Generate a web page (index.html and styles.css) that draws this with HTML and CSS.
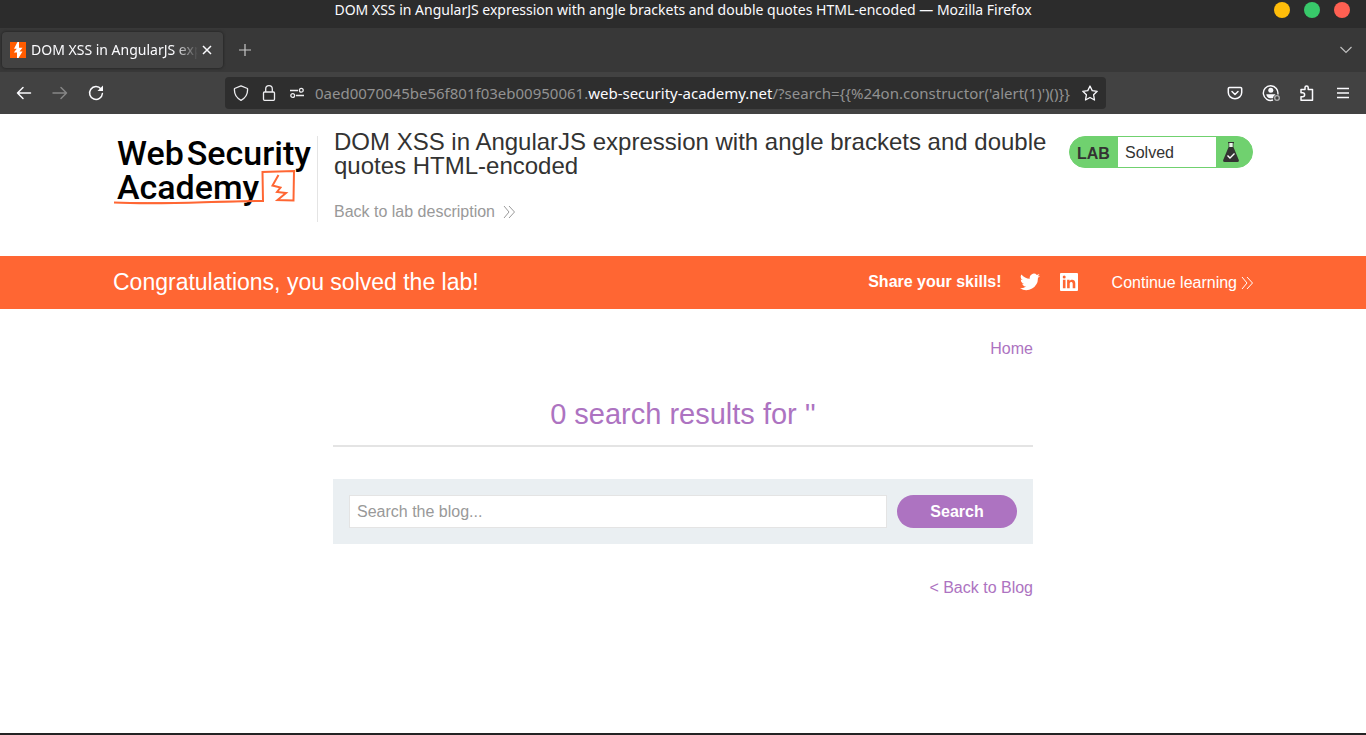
FILE: index.html
```html
<!DOCTYPE html>
<html lang="en">
<head>
<meta charset="utf-8">
<title>DOM XSS in AngularJS expression with angle brackets and double quotes HTML-encoded</title>
<link rel="stylesheet" href="styles.css">
</head>
<body>
<div class="titlebar">
  <span class="window-title">DOM XSS in AngularJS expression with angle brackets and double quotes HTML-encoded — Mozilla Firefox</span>
  <div class="window-buttons">
    <button class="dot dot-yellow" aria-label="Minimize"></button>
    <button class="dot dot-green" aria-label="Maximize"></button>
    <button class="dot dot-red" aria-label="Close window"></button>
  </div>
</div>
<div class="tabbar">
  <div class="tab">
    <svg class="favicon" viewBox="0 0 16 16"><path fill="#ff5c00" d="M0 0h16v16H0z"/><path fill="#fff" d="M7.500 0H9v5.800h3.500L9.500 9.500H12.500L8.500 16H7v-5.500H3.800L6.800 6.800H4z"/></svg>
    <span class="tab-label">DOM XSS in AngularJS exp</span>
    <button class="icon-button tab-close" aria-label="Close tab"><svg width="10" height="10" viewBox="0 0 10 10"><path d="M1 1l8 8M9 1L1 9" stroke="#fbfbfe" stroke-width="1.500"/></svg></button>
  </div>
  <button class="icon-button new-tab" aria-label="New tab"><svg width="12" height="12" viewBox="0 0 12 12"><path d="M6 0v12M0 6h12" stroke="#c8c8c8" stroke-width="1.200"/></svg></button>
  <button class="icon-button tab-list" aria-label="List all tabs"><svg width="12" height="8" viewBox="0 0 12 8"><path d="M.5 1L6 6.500 11.500 1" fill="none" stroke="#c0c0c0" stroke-width="1.200"/></svg></button>
</div>
<div class="toolbar">
  <div class="nav-buttons">
    <button class="icon-button" aria-label="Back"><svg width="16" height="16" viewBox="0 0 16 16" fill="none" stroke="#fbfbfe" stroke-width="1.500" stroke-linecap="round" stroke-linejoin="round"><path d="M14.500 8H1.500M7 2.500L1.500 8 7 13.500"/></svg></button>
    <button class="icon-button" aria-label="Forward"><svg width="16" height="16" viewBox="0 0 16 16" fill="none" stroke="#868686" stroke-width="1.500" stroke-linecap="round" stroke-linejoin="round"><path d="M1 8h13.500M9 2.500L14.500 8 9 13.500"/></svg></button>
    <button class="icon-button" aria-label="Reload"><svg width="16" height="16" viewBox="0 0 16 16"><path d="M13 4A6.400 6.400 0 1 0 14.400 8.500" fill="none" stroke="#fbfbfe" stroke-width="1.500" stroke-linecap="round"/><path d="M15 .5V6H9.500z" fill="#fbfbfe"/></svg></button>
  </div>
  <div class="urlbar">
    <svg width="16" height="16" viewBox="0 0 16 16" fill="none" stroke="#ededf0" stroke-width="1.300" stroke-linejoin="round"><path d="M8 .8L14.500 3.500C15 8.500 12.500 13 8 15.300 3.500 13 1 8.500 1.500 3.500z"/></svg>
    <svg width="16" height="16" viewBox="0 0 16 16" fill="none" stroke="#ededf0" stroke-width="1.300"><rect x="2.500" y="7" width="11" height="8.300" rx="1"/><path d="M4.700 7V4a3.300 3.300 0 0 1 6.600 0v3"/></svg>
    <svg width="16" height="16" viewBox="0 0 16 16" fill="none" stroke="#ededf0" stroke-width="1.300"><path d="M1 5.500h8M7 10.500h8"/><circle cx="12.300" cy="5.300" r="1.900"/><circle cx="3.700" cy="10.500" r="1.900"/></svg>
    <span class="url">0aed0070045be56f801f03eb00950061.<b>web-security-academy.net</b>/?search={{%24on.constructor('alert(1)')()}}</span>
    <button class="icon-button" aria-label="Bookmark this page"><svg width="16" height="16" viewBox="0 0 16 16"><path d="M8 1l2.200 4.600 5 .7-3.600 3.500.9 5.200L8 12.500 3.500 15l.9-5.200L.8 6.300l5-.7z" fill="none" stroke="#fbfbfe" stroke-width="1.300" stroke-linejoin="round"/></svg></button>
  </div>
  <div class="tool-buttons">
    <button class="icon-button" aria-label="Save to Pocket"><svg width="16" height="16" viewBox="0 0 16 16" fill="none" stroke="#fbfbfe" stroke-width="1.500" stroke-linecap="round" stroke-linejoin="round"><path d="M2.500 2.500h11a1.200 1.200 0 0 1 1.200 1.200V7.500a6.700 6.200 0 0 1-13.400 0V3.700a1.200 1.200 0 0 1 1.200-1.200zM5 6.500l3 3 3-3"/></svg></button>
    <button class="icon-button" aria-label="Account"><svg width="18" height="18" viewBox="0 0 18 18"><path d="M11 16A7.300 7.300 0 1 1 15.800 10.500" fill="none" stroke="#fbfbfe" stroke-width="1.400"/><circle cx="8.800" cy="6.300" r="2.500" fill="#fbfbfe"/><path d="M4.300 10.200h9v.6Q11 12 11 14.200H8.500c-2.400 0-4.200-1.700-4.200-4z" fill="#fbfbfe"/><circle cx="15" cy="14" r="2.300" fill="#424242" stroke="#b0b0b0" stroke-width="1.300"/></svg></button>
    <button class="icon-button" aria-label="Extensions"><svg width="16" height="16" viewBox="0 0 16 16" fill="none" stroke="#fbfbfe" stroke-width="1.500" stroke-linejoin="round"><path d="M2 7.800V4.500h4V2.600a1.600 1.600 0 0 1 3.200 0v1.900h4.300v10.700H2V11.800h1.600a1.900 1.900 0 0 0 0-4z"/></svg></button>
    <button class="icon-button" aria-label="Open menu"><svg width="12" height="12" viewBox="0 0 12 12"><path d="M0 1.500h12M0 6h12M0 10.500h12" stroke="#fbfbfe" stroke-width="1.400"/></svg></button>
  </div>
</div>

<main class="page">
  <header class="lab-header container">
    <a class="logo" href="#" aria-label="Web Security Academy">
      <span class="logo-line"><span>Web</span><span>Security</span></span>
      <span class="logo-line">Academy</span>
      <svg class="logo-mark" viewBox="0 0 184 37" fill="none" stroke="#ff6633" stroke-width="2"><path d="M1 33.500C50 36 90 32.500 150 32L149.500 3 181 2 180.500 31.500 164.500 31 173 24 164 23 167.500 18.500 159.500 16.500 165.500 6"/><path d="M1 33.500C45 34 90 34 138 32" stroke-width="1"/></svg>
    </a>
    <div class="lab-title">
      <h2>DOM XSS in AngularJS expression with angle brackets and double quotes HTML-encoded</h2>
      <a class="back-link" href="#">Back to lab description <svg width="12" height="12" viewBox="0 0 12 12"><path d="M1 0l5 6-5 6M6 0l5.500 6L6 12"/></svg></a>
    </div>
    <div class="lab-status">
      <span class="lab-tag">LAB</span>
      <span class="lab-state">Solved</span>
      <svg class="flask" width="16" height="20" viewBox="0 0 16 20"><path d="M5 0h6v1.200h-.6V5L15.800 18q.5 2-1.500 2H1.700Q-.3 20 .2 18L5.600 5V1.200H5z" fill="#333332"/><path d="M6.300 1h3.400v4H6.300z" fill="#e8f7e7"/><path d="M4.500 13.500L7 16l4.500-4.500" fill="none" stroke="#fff" stroke-width="1.400"/></svg>
    </div>
  </header>

  <section class="banner">
    <div class="container banner-row">
      <h4>Congratulations, you solved the lab!</h4>
      <span class="share">Share your skills!</span>
      <a class="social" href="#" aria-label="Twitter"><svg width="20" height="18" viewBox="0 0 24 20"><path fill="#fff" d="M24 2.400a10 10 0 0 1-2.800.8A5 5 0 0 0 23.300.5a10 10 0 0 1-3.100 1.200 4.900 4.900 0 0 0-8.400 4.500A14 14 0 0 1 1.700 1a4.900 4.900 0 0 0 1.500 6.600A5 5 0 0 1 1 7a4.900 4.900 0 0 0 3.900 4.900 5 5 0 0 1-2.200.1 4.900 4.900 0 0 0 4.600 3.400A10 10 0 0 1 0 17.400 14 14 0 0 0 21.500 5 10 10 0 0 0 24 2.400z"/></svg></a>
      <a class="social linkedin" href="#" aria-label="LinkedIn"><svg width="18" height="18" viewBox="0 0 18 18"><rect width="18" height="18" rx="1" fill="#fff"/><g fill="#ff6633"><circle cx="4.200" cy="4" r="1.500"/><path d="M2.900 6.800h2.600v8.400H2.900zM7.100 6.800h2.500V8c1.200-2 5.700-2.200 5.700 2.200v5h-2.600v-4.500c0-2.500-3-2.300-3 0v4.500H7.100z"/></g></svg></a>
      <a class="continue" href="#">Continue learning <svg width="12" height="12" viewBox="0 0 12 12"><path d="M1 0l5 6-5 6M6 0l5.500 6L6 12"/></svg></a>
    </div>
  </section>

  <section class="blog">
    <nav class="blog-nav"><a href="#">Home</a></nav>
    <h1>0 search results for ''</h1>
    <form class="search">
      <input type="text" placeholder="Search the blog..." aria-label="Search the blog">
      <button type="button">Search</button>
    </form>
    <a class="blog-back" href="#">&lt; Back to Blog</a>
  </section>
</main>
</body>
</html>
```
FILE: styles.css
```css
* { box-sizing: border-box; }

body {
  margin: 0;
  min-height: 100vh;
  display: flex;
  flex-direction: column;
  background: #fff;
  color: #333332;
  font: 16px/20px "Liberation Sans", Arial, sans-serif;
}

a { text-decoration: none; }
svg { display: block; flex: none; }
h1, h2, h4 { margin: 0; font-weight: 400; }

.titlebar, .tabbar, .toolbar {
  display: flex;
  align-items: center;
  color: #fbfbfe;
  font-family: "Noto Sans", "Open Sans", sans-serif;
}

.icon-button {
  display: flex;
  align-items: center;
  justify-content: center;
  flex: none;
  padding: 0;
  border: 0;
  background: none;
}

.titlebar {
  height: 28px;
  padding: 0 16px 8px;
  background: #2c2c2c;
  font-size: 14px;
}
.window-title { flex: 1; padding-left: 76px; text-align: center; white-space: nowrap; }
.window-buttons { display: flex; gap: 14px; }
.dot { width: 16px; height: 16px; padding: 0; border: 0; border-radius: 50%; }
.dot-yellow { background: #ffbd0a; }
.dot-green { background: #38c96a; }
.dot-red { background: #ff6052; }

.tabbar { height: 44px; padding: 0 14px 0 2px; background: #383838; }
.tab {
  display: flex;
  align-items: center;
  width: 221px;
  height: 36px;
  padding: 0 11px 0 8px;
  border-radius: 4px;
  background: #424242;
  box-shadow: 0 0 3px #1c1c1c;
  font-size: 14px;
}
.favicon { width: 16px; height: 16px; }
.tab-label {
  flex: 1;
  margin-left: 5px;
  overflow: hidden;
  white-space: nowrap;
  mask-image: linear-gradient(to left, transparent, #000 24px);
}
.tab-close { margin-left: 4px; }
.new-tab { margin-left: 16px; }
.tab-list { margin-left: auto; }

.toolbar { height: 42px; background: #424242; }
.nav-buttons { display: flex; gap: 20px; padding-left: 16px; }
.urlbar {
  display: flex;
  align-items: center;
  gap: 12px;
  flex: 1;
  height: 32px;
  margin-left: 121px;
  padding: 0 8px;
  border-radius: 4px;
  background: #2e2e2e;
}
.url { flex: 1; min-width: 0; white-space: nowrap; color: #929292; font-size: 15px; margin-left: -2px; }
.url b { font-weight: 400; color: #fbfbfe; }
.tool-buttons { display: flex; align-items: center; padding: 0 6px 0 111px; }
.tool-buttons .icon-button { width: 36px; }

.page { flex: 1; border-bottom: 2px solid #242424; }
.container { width: 100%; max-width: 1172px; margin: 0 auto; padding: 0 16px; }

.lab-header { display: flex; align-items: flex-start; padding-top: 16px; padding-bottom: 34px; }
.logo {
  position: relative;
  flex: none;
  width: 205px;
  height: 86px;
  margin-top: 6px;
  padding-left: 4px;
  border-right: 1px solid #e4e4e4;
  color: #000;
  font: 500 34px/34px Roboto, sans-serif;
}
.logo-line { display: flex; gap: 3px; }
.logo-mark { position: absolute; left: 0; top: 33px; width: 184px; height: 37px; }
.lab-title { flex: 1; padding-left: 16px; }
.lab-title h2 { font-size: 24px; line-height: 24px; }
.back-link { display: flex; align-items: center; gap: 8px; margin-top: 24px; color: #999; }
.back-link svg, .continue svg { fill: none; stroke: currentColor; stroke-width: 1; }

.lab-status {
  display: flex;
  align-items: center;
  width: 184px;
  height: 32px;
  margin: 6px 0 0 16px;
  border: 1px solid #70d16f;
  border-radius: 16px;
  background: #70d16f;
}
.lab-tag { width: 48px; padding: 3px 0 0 7px; font-weight: 700; }
.lab-state { width: 98px; height: 30px; padding: 1px 7px 0; background: #fff; line-height: 30px; }
.flask { margin-left: 7px; }

.banner { background: #ff6633; color: #fff; }
.banner-row { display: flex; align-items: center; height: 53px; }
.banner h4 { margin-right: auto; padding-bottom: 2px; font-size: 23px; line-height: 28px; }
.share { padding-bottom: 2px; font-weight: 700; }
.social { margin-left: 18px; padding-bottom: 1px; }
.linkedin { margin-left: 20px; }
.continue { display: flex; align-items: center; gap: 4px; margin-left: 34px; color: #fff; }

.blog { width: 100%; max-width: 700px; margin: 0 auto; padding-top: 30px; color: #ad73c1; }
.blog a { color: #ad73c1; }
.blog-nav { text-align: right; }
.blog h1 {
  margin-top: 35px;
  padding-bottom: 11px;
  border-bottom: 2px solid #e4e4e4;
  font-size: 29px;
  line-height: 40px;
  text-align: center;
}
.search { display: flex; gap: 10px; margin-top: 32px; padding: 16px; background: #eaeff2; }
.search input {
  flex: 1;
  min-width: 0;
  height: 33px;
  padding: 0 7px;
  border: 1px solid #e4e4e4;
  background: #fff;
  color: #333332;
  font: inherit;
}
.search input::placeholder { color: #999; }
.search button {
  width: 120px;
  height: 33px;
  padding: 0;
  border: 0;
  border-radius: 17px;
  background: #ad73c1;
  color: #fff;
  font: inherit;
  font-weight: 700;
}
.blog-back { display: block; margin-top: 34px; text-align: right; }
```
